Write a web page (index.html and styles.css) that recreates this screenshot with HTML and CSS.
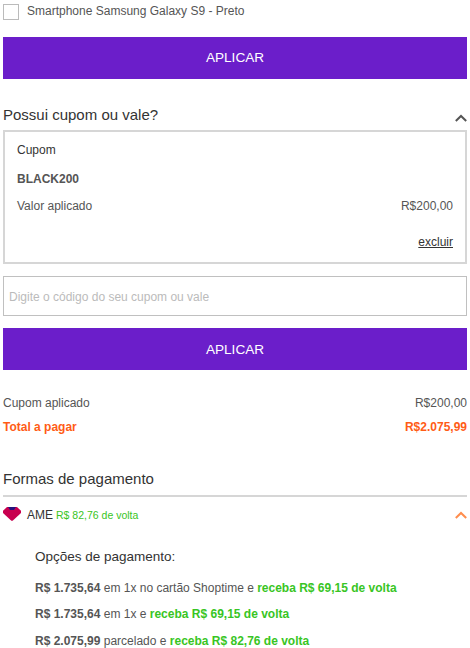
FILE: index.html
```
<!DOCTYPE html>
<html lang="pt-BR">
<head>
  <meta charset="UTF-8">
  <meta name="viewport" content="width=device-width, initial-scale=1.0">
  <title>Pagamento</title>
  <link rel="stylesheet" href="styles.css">
</head>
<body>
  <div class="checkout">
    <label class="product">
      <input type="checkbox">
      <span>Smartphone Samsung Galaxy S9 - Preto</span>
    </label>
    <button class="btn btn-product">APLICAR</button>

    <div class="section-title coupon-title">
      <h2>Possui cupom ou vale?</h2>
      <svg class="arrow" width="12" height="8" viewBox="0 0 12 8"><path d="M.8 7 6 2l5.2 5" fill="none" stroke="#555" stroke-width="2"/></svg>
    </div>
    <div class="coupon">
      <h3>Cupom</h3>
      <p class="code">BLACK200</p>
      <div class="row">
        <span>Valor aplicado</span>
        <span>R$200,00</span>
      </div>
      <a href="#" class="remove">excluir</a>
    </div>
    <input type="text" class="code-input" placeholder="Digite o código do seu cupom ou vale">
    <button class="btn">APLICAR</button>

    <div class="summary">
      <div class="row">
        <span>Cupom aplicado</span>
        <span>R$200,00</span>
      </div>
      <div class="row total">
        <span>Total a pagar</span>
        <span>R$2.075,99</span>
      </div>
    </div>

    <div class="section-title payment-title">
      <h2>Formas de pagamento</h2>
    </div>
    <div class="method">
      <svg class="ame" width="18" height="14" viewBox="0 0 18 14"><path d="M4 0h10l4 3.7V6l-7.8 7.2q-1.2 1-2.4 0L0 6V3.7z" fill="#c8004f"/><path d="M5 0h8l-2 3H7z" fill="#25127d"/></svg>
      <span class="method-name">AME</span>
      <span class="cashback">R$ 82,76 de volta</span>
      <svg class="arrow" width="12" height="8" viewBox="0 0 12 8"><path d="M.8 7 6 2l5.2 5" fill="none" stroke="#ff8d4d" stroke-width="2"/></svg>
    </div>
    <div class="options">
      <h3>Opções de pagamento:</h3>
      <p><b>R$ 1.735,64</b> em 1x no cartão Shoptime e <b class="green">receba R$ 69,15 de volta</b></p>
      <p><b>R$ 1.735,64</b> em 1x e <b class="green">receba R$ 69,15 de volta</b></p>
      <p><b>R$ 2.075,99</b> parcelado e <b class="green">receba R$ 82,76 de volta</b></p>
    </div>
  </div>
</body>
</html>
```
FILE: styles.css
```
* {
  box-sizing: border-box;
}
body {
  margin: 0;
  background: #fff;
  color: #555;
  font-family: "Liberation Sans", Arial, sans-serif;
  font-size: 12px;
  overflow: hidden;
}
h2, h3, p {
  margin: 0;
  font-weight: normal;
}
.checkout {
  padding: 0 3px;
}
.product {
  display: flex;
  height: 37px;
  padding-top: 4px;
  line-height: 15px;
}
.product input {
  appearance: none;
  width: 16px;
  height: 16px;
  margin: 0 8px 0 0;
  border: 1px solid #bbb;
}
.btn {
  display: block;
  width: 100%;
  height: 42px;
  padding: 0;
  border: 0;
  background: #6b1eca;
  color: #fff;
  font-family: inherit;
  font-size: 13.6px;
}
.btn-product {
  padding-bottom: 2px;
}
.section-title {
  display: flex;
  justify-content: space-between;
  color: #333;
}
.section-title h2 {
  font-size: 15px;
  line-height: 20px;
}
.coupon-title {
  height: 51px;
  padding-top: 26px;
}
.coupon-title .arrow {
  margin-top: 9px;
}
.coupon {
  height: 134px;
  padding: 10px 12px;
  border: 2px solid #d6d6d6;
}
.coupon h3 {
  color: #333;
  font-size: 12px;
  line-height: 16px;
}
.code {
  margin: 13px 0 11px;
  font-weight: bold;
  line-height: 16px;
}
.row {
  display: flex;
  justify-content: space-between;
  line-height: 16px;
}
.remove {
  display: block;
  margin-top: 20px;
  color: #333;
  line-height: 16px;
  text-align: right;
}
.code-input {
  display: block;
  width: 100%;
  height: 40px;
  margin: 12px 0;
  padding: 1px 5px 0;
  border: 1px solid #c0c0c0;
  font-family: inherit;
  font-size: 12px;
}
.code-input::placeholder {
  color: #bbb;
}
.summary {
  padding-top: 25px;
}
.total {
  margin-top: 8px;
  color: #ff5c16;
  font-weight: bold;
}
.payment-title {
  height: 62px;
  padding-top: 34px;
  border-bottom: 2px solid #d6d6d6;
}
.method {
  display: flex;
  align-items: center;
  height: 36px;
}
.ame {
  margin: -2px 6px 0 0;
}
.method-name {
  margin-right: 3px;
  color: #333;
}
.cashback {
  color: #38c524;
  font-size: 10.5px;
}
.method .arrow {
  margin-left: auto;
}
.options {
  padding: 14px 0 0 32px;
}
.options h3 {
  margin-bottom: 13px;
  color: #333;
  font-size: 13.5px;
  line-height: 20px;
}
.options p {
  margin-bottom: 10.4px;
  line-height: 16px;
}
.green {
  color: #38c524;
}
```
